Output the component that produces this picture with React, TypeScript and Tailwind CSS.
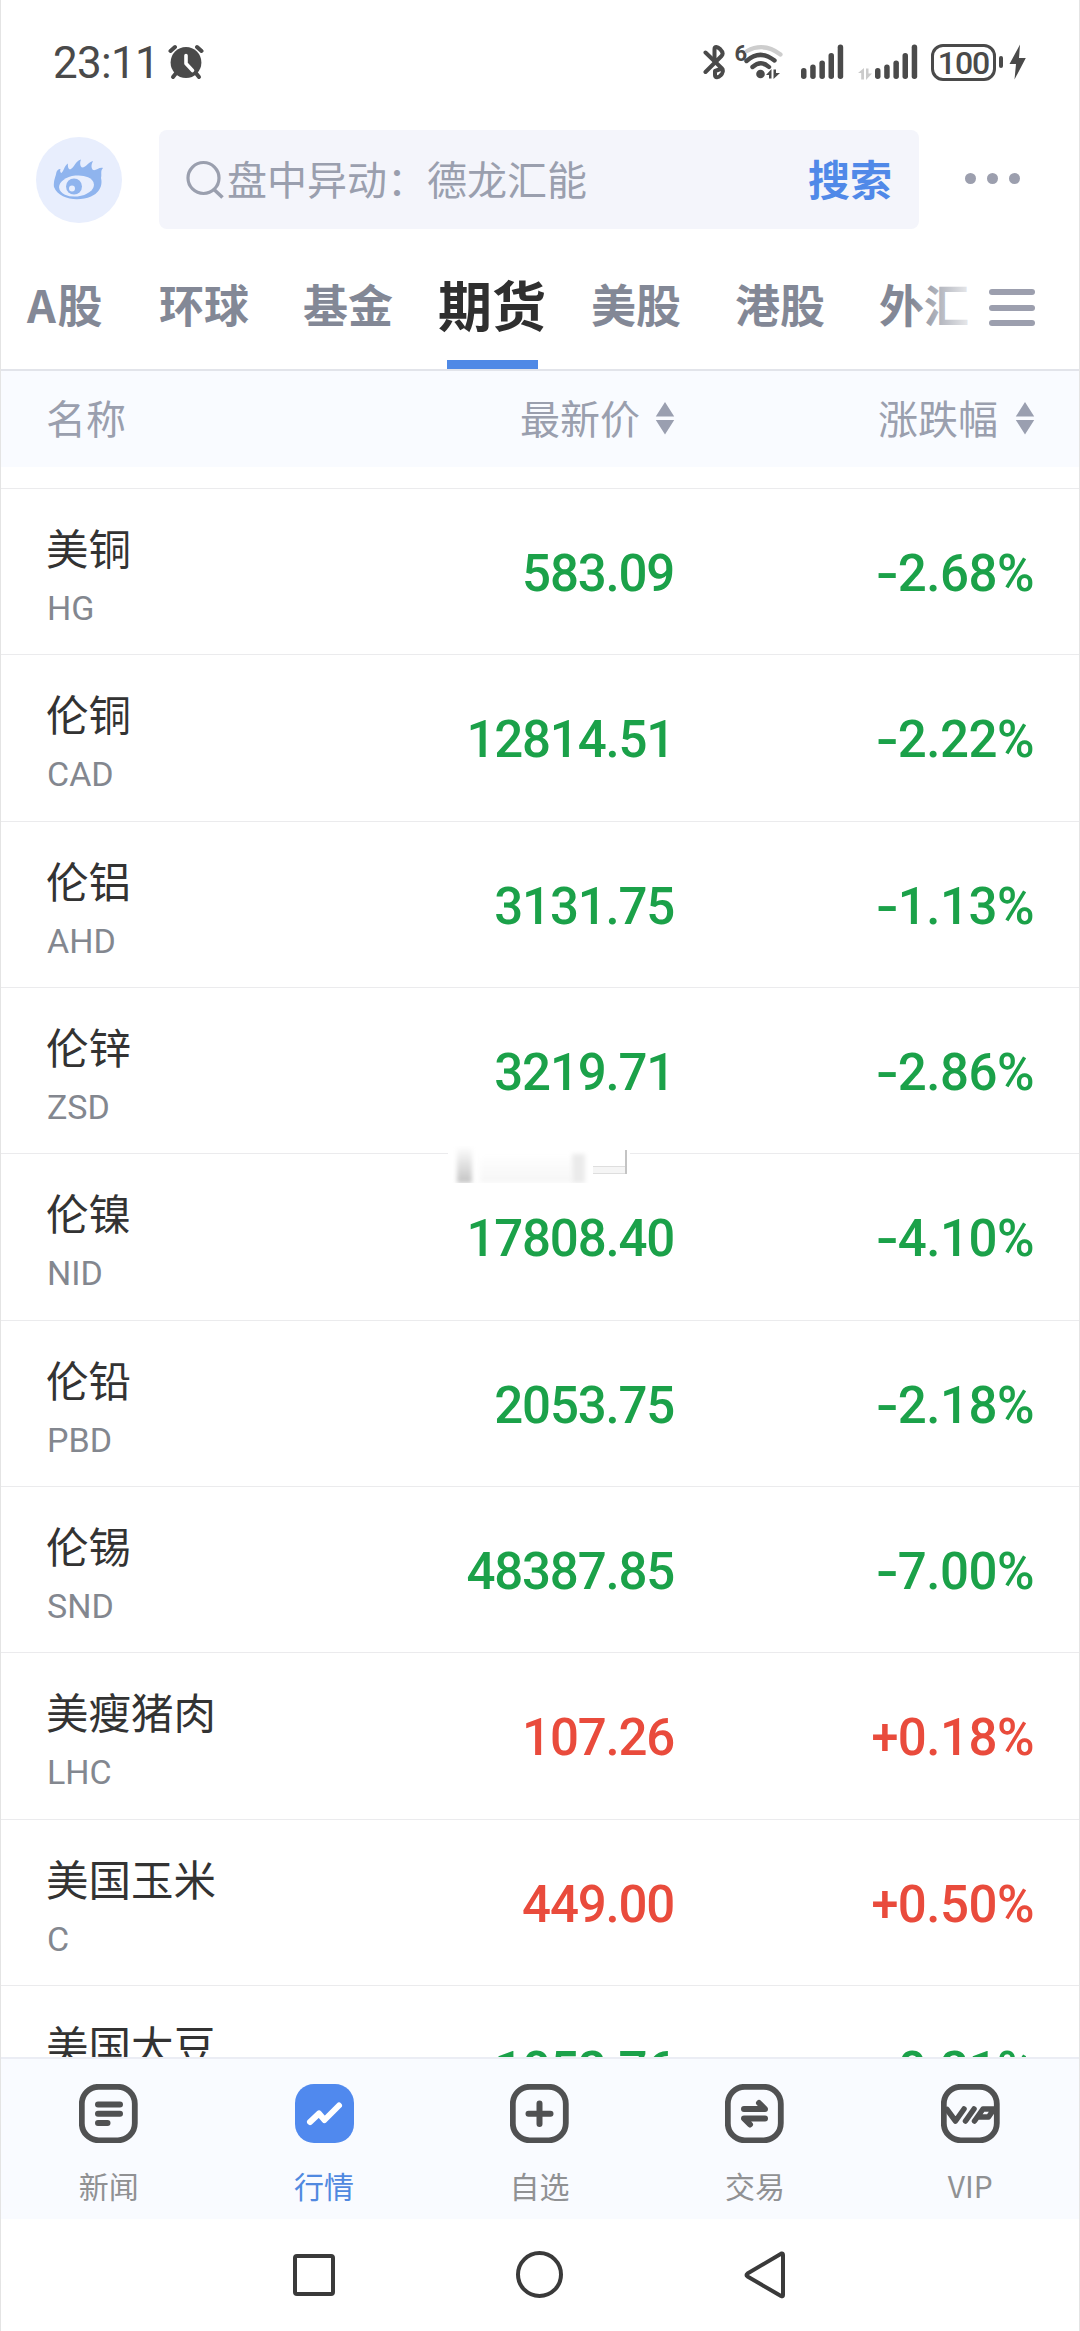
import React from "react";
import clsx from "clsx";

const tabs = ["A股", "环球", "基金", "期货", "美股", "港股", "外汇"];

const quotes = [
  { name: "美铜", code: "HG", price: "583.09", change: "-2.68%" },
  { name: "伦铜", code: "CAD", price: "12814.51", change: "-2.22%" },
  { name: "伦铝", code: "AHD", price: "3131.75", change: "-1.13%" },
  { name: "伦锌", code: "ZSD", price: "3219.71", change: "-2.86%" },
  { name: "伦镍", code: "NID", price: "17808.40", change: "-4.10%" },
  { name: "伦铅", code: "PBD", price: "2053.75", change: "-2.18%" },
  { name: "伦锡", code: "SND", price: "48387.85", change: "-7.00%" },
  { name: "美瘦猪肉", code: "LHC", price: "107.26", change: "+0.18%" },
  { name: "美国玉米", code: "C", price: "449.00", change: "+0.50%" },
  { name: "美国大豆", code: "S", price: "1052.76", change: "-0.21%" },
];

function AlarmIcon() {
  return (
    <svg width="36" height="36" viewBox="0 0 36 36" className="ml-[9px] text-[#4a4a4a]">
      <path d="M9 28 L5 33 M27 28 L31 33" stroke="currentColor" strokeWidth="4" strokeLinecap="round" />
      <path d="M2.500 7 L7 3 M33.500 7 L29 3" stroke="currentColor" strokeWidth="4" strokeLinecap="round" />
      <circle cx="18" cy="18.500" r="15.400" fill="currentColor" />
      <path d="M18 11.500 V19.500 L24.500 26.500" stroke="#fff" strokeWidth="3.600" strokeLinecap="round" strokeLinejoin="round" fill="none" />
    </svg>
  );
}

function BluetoothIcon() {
  return (
    <svg width="22" height="36" viewBox="0 0 22 36" fill="none" stroke="#4a4a4a" strokeWidth="4" strokeLinecap="round" strokeLinejoin="round">
      <path d="M2.500 8.500 L19 24.500 C20.500 26 20 29 17.500 31.500 C15.500 33.800 12 34 12 31 V27 L19 24.500" />
      <path d="M2.500 28 L18.500 12 C20.500 10 19.500 7.500 17 5 C14.500 2.500 11.500 2 11.500 5 V17" />
    </svg>
  );
}

function WifiIcon() {
  return (
    <svg width="48" height="36" viewBox="0 0 48 36" fill="none" strokeLinecap="round">
      <path d="M12 7 Q29 -2 45.500 10.500" stroke="#cdcdcd" strokeWidth="4.200" />
      <path d="M11.500 17 Q25 5 39.500 16.500" stroke="#4a4a4a" strokeWidth="4.400" />
      <path d="M17.500 23 Q26 15.500 34 23" stroke="#4a4a4a" strokeWidth="4.400" />
      <circle cx="25.500" cy="30" r="4.300" fill="#4a4a4a" />
      <path d="M36.500 25 V34.500 H34 V31 H31 Z M38.500 35 V25.500 H41 V29 H45 Z" fill="#4a4a4a" />
    </svg>
  );
}

function SignalIcon({ className }: { className?: string }) {
  return (
    <svg width="43" height="36" viewBox="0 0 43 36" className={className} fill="#4a4a4a">
      <rect x="0" y="24" width="5.500" height="11" rx="2.700" />
      <rect x="9.200" y="20.500" width="5.500" height="14.500" rx="2.700" />
      <rect x="18.400" y="16.500" width="5.500" height="18.500" rx="2.700" />
      <rect x="27.500" y="9" width="5.500" height="26" rx="2.700" />
      <rect x="36.700" y="0.500" width="5.500" height="34.500" rx="2.700" />
    </svg>
  );
}

function DataArrows() {
  return (
    <svg width="14" height="12" viewBox="0 0 14 12" className="mt-6 ml-[14px]" fill="#cbcbcb">
      <path d="M6 0 V11.500 H3.200 V5 H0 Z M8 0.500 H10.500 V5.500 H14 L8 12 Z" />
    </svg>
  );
}

function BoltIcon() {
  return (
    <svg width="17" height="36" viewBox="0 0 17 36" className="ml-[6px]" fill="#4a4a4a">
      <path d="M11 0.500 L0.500 20 H7 L5.500 35.500 L16.800 14 H10 Z" />
    </svg>
  );
}

function StatusBar() {
  return (
    <div className="flex h-[130px] items-start pt-[44px] pr-[53px] pl-[52px]">
      <span className="font-['Roboto',sans-serif] text-[44px] leading-[38px] tracking-[-0.7px] text-[#4a4a4a]">
        23:11
      </span>
      <AlarmIcon />
      <div className="ml-auto flex items-start">
        <BluetoothIcon />
        <span className="-mt-px -mr-[12px] ml-[9px] font-['Roboto',sans-serif] text-[22px] leading-[22px] font-bold text-[#4a4a4a]">
          6
        </span>
        <WifiIcon />
        <SignalIcon className="ml-[18px]" />
        <DataArrows />
        <SignalIcon className="ml-[3px]" />
        <div className="ml-[13px] flex h-[37px] w-[65px] items-center justify-center rounded-[12px] border-[3px] border-[#4a4a4a] font-['Roboto',sans-serif] text-[32px] font-medium tracking-[-1px] text-[#4a4a4a]">
          100
        </div>
        <div className="mt-[12px] ml-[3px] h-[12px] w-1 rounded-full bg-[#4a4a4a]" />
        <BoltIcon />
      </div>
    </div>
  );
}

function EyeLogo() {
  return (
    <div className="flex size-[86px] items-center justify-center rounded-full bg-[#e8eefd]">
      <svg width="52" height="42" viewBox="0 0 52 42">
        <path
          fill="#8fb4ee"
          d="M1 28 C0 22 3 17 3.500 13 C4 11 6 9.500 7.500 10 C6.500 13 8 14 8.500 14 C11 12 11 7 15 4.500 C14.500 8 15.500 10 17 10.500 C22 8.500 22 2 28 0.500 C26 5 28 8 29 8.500 C34 8 34 4 40 2 C38 6 38 9 40 11 C43 12 46 8 50 9 C47 12 49 15 48 19 C50 27 46 34 38 37.500 C26 42.500 6 41 1 28 Z"
        />
        <ellipse cx="23.500" cy="27" rx="17.500" ry="10.500" fill="#e8eefd" transform="rotate(-6 23.500 27)" />
        <circle cx="21" cy="27.500" r="8" fill="#8fb4ee" />
        <circle cx="19" cy="29.500" r="3" fill="#e8eefd" />
      </svg>
    </div>
  );
}

function SearchHeader() {
  return (
    <div className="flex h-[99px] items-center pl-[35px]">
      <EyeLogo />
      <div className="ml-[37px] flex h-full w-[760px] items-center rounded-[8px] bg-[#f4f5fb] px-[27px]">
        <svg width="39" height="40" viewBox="0 0 39 40" fill="none" stroke="#9a9fae" strokeWidth="3.200">
          <circle cx="17.500" cy="18" r="15.500" />
          <path d="M27.500 29 L36.500 37.500" strokeWidth="3.600" />
        </svg>
        <span className="mb-[3px] ml-0.5 text-[40px] leading-[40px] text-[#9a9fae]">盘中异动：德龙汇能</span>
        <span className="mb-[3px] ml-auto text-[42px] leading-[42px] font-bold text-[#5089e8]">搜索</span>
      </div>
      <div className="mb-0.5 ml-[46px] flex gap-[11px]">
        <i className="size-[11px] rounded-full bg-[#9c9fae]" />
        <i className="size-[11px] rounded-full bg-[#9c9fae]" />
        <i className="size-[11px] rounded-full bg-[#9c9fae]" />
      </div>
    </div>
  );
}

function Tabs() {
  return (
    <div className="flex h-[142px] border-b-2 border-[#e2e4ea]">
      <div className="relative flex w-[967px] gap-[54px] overflow-hidden pl-[25px] whitespace-nowrap">
        {tabs.map((tab) => {
          const active = tab === "期货";
          return (
            <div
              key={tab}
              className={clsx(
                "flex h-full shrink-0 flex-col items-center justify-between pt-[42px] font-bold",
                active ? "-mx-[9px] text-[54px] leading-[66px] text-[#2f2f2f]" : "text-[45px] leading-[66px] text-[#838896]",
                tab === "A股" && "w-[79px] tracking-[1.5px]",
              )}
            >
              {tab}
              {active && <div className="h-[9px] w-[91px] bg-[#4f89e6]" />}
            </div>
          );
        })}
        <div className="absolute top-0 right-0 h-full w-[56px] bg-linear-to-r from-white/0 to-white/80" />
      </div>
      <div className="mt-[60px] ml-[21px] flex h-[37px] w-[46px] flex-col justify-between">
        <div className="h-[6px] rounded-full bg-[#9c9fae]" />
        <div className="h-[6px] rounded-full bg-[#9c9fae]" />
        <div className="h-[6px] rounded-full bg-[#9c9fae]" />
      </div>
    </div>
  );
}

function SortArrows() {
  return (
    <svg width="20" height="33" viewBox="0 0 20 34" fill="#9a9fb0" className="mt-[3px]">
      <path d="M10 0 L19.500 15 H0.500 Z M10 33.500 L19.500 18.500 H0.500 Z" />
    </svg>
  );
}

function TableHeader() {
  return (
    <div className="flex h-[96px] items-center bg-[#f9fbff] pr-[44px] pb-[5px] pl-[45px] text-[40px] leading-[40px] text-[#9a9fae]">
      <span>名称</span>
      <span className="ml-auto flex items-center gap-[15px]">
        最新价
        <SortArrows />
      </span>
      <span className="flex w-[360px] items-center justify-end gap-[17px]">
        涨跌幅
        <SortArrows />
      </span>
    </div>
  );
}

function QuoteRow({ quote }: { quote: (typeof quotes)[number] }) {
  const up = quote.change.startsWith("+");
  return (
    <div className="flex h-[166.33px] shrink-0 items-center border-b-[1.5px] border-[#ebebed] pr-[45px] pl-[45px]">
      <div className="flex flex-col pt-[9px]">
        <span className="text-[42.5px] leading-[56px] text-[#333333]">{quote.name}</span>
        <span className="mt-[8px] pl-px font-['Roboto',sans-serif] text-[34px] leading-[50px] text-[#83878f]">
          {quote.code}
        </span>
      </div>
      <div
        className={clsx(
          "ml-auto flex pt-[5px] font-['Roboto',sans-serif] text-[51px] font-medium",
          up ? "text-[#e94b3c]" : "text-[#1ba149]",
        )}
      >
        <span className="tracking-[-1.2px]">{quote.price}</span>
        <span className="w-[360px] text-right tracking-[-0.5px]">
          <span className={clsx("inline-block origin-right", up ? "scale-x-95" : "scale-x-[1.3]")}>
            {quote.change[0]}
          </span>
          {quote.change.slice(1)}
        </span>
      </div>
    </div>
  );
}

// Leftover of a floating toast that is fading out over the list
function FadingMark() {
  return (
    <div className="absolute top-[679px] left-[447px] flex h-[37px] w-[182px] items-stretch overflow-hidden bg-white">
      <div className="ml-[9px] w-[15px] bg-linear-to-b from-white to-[#c4c4c4] blur-[2px]" />
      <div className="mt-2 ml-2 w-[92px] bg-linear-to-b from-white to-[#f6f6f6] blur-[2px]" />
      <div className="mt-2 w-[13px] bg-[#ebebeb] blur-[2px]" />
      <div className="mt-5 ml-2 h-[8px] w-[32px] border-y border-[#dedede] bg-[#f5f5f5]" />
      <div className="mt-1 h-[24px] w-[2px] bg-[#c4c4c4]" />
    </div>
  );
}

const frame = { x: 2.8, y: 2.8, width: 53, height: 53.5, rx: 17, strokeWidth: 5.8 };

function NavIcon({ name }: { name: string }) {
  return (
    <svg width="59" height="59" viewBox="0 0 59 59" fill="none" stroke="#505152" strokeLinecap="round" strokeLinejoin="round">
      {name === "行情" ? (
        <>
          <rect width="59" height="59" rx="19" fill="#5089ee" stroke="none" />
          <path d="M15 38 L24 29.500 L29.500 36 L44 21.500" stroke="#fff" strokeWidth="6" />
        </>
      ) : (
        <rect {...frame} />
      )}
      {name === "新闻" && <path d="M19 20.500 H41 M19 29.800 H41 M19 39 H28.500" strokeWidth="6" />}
      {name === "自选" && <path d="M29.500 19.500 V40 M18.500 29.800 H40.500" strokeWidth="6" />}
      {name === "交易" && (
        <>
          <path d="M19 25 H40 L34 19" strokeWidth="6" />
          <path d="M40 34.500 H19 L25 40.500" strokeWidth="6" />
        </>
      )}
      {name === "VIP" && (
        <path d="M6 25.500 L14.500 37 L23 25 M24.500 37 L33 25 M33.500 37 L42 25 H53 L47.500 33 H38" strokeWidth="5.500" />
      )}
    </svg>
  );
}

function BottomNav() {
  return (
    <div className="flex h-[162px] shrink-0 border-t-2 border-[#ebedf4] bg-[#f9fbff] pr-px">
      {["新闻", "行情", "自选", "交易", "VIP"].map((name) => (
        <div key={name} className="flex flex-1 flex-col items-center pt-[25px]">
          <NavIcon name={name} />
          <span
            className={clsx("mt-[22px] text-[30px] leading-[40px]", name === "行情" ? "text-[#5089e0]" : "text-[#909193]")}
          >
            {name}
          </span>
        </div>
      ))}
    </div>
  );
}

function SystemNav() {
  return (
    <div className="flex h-[112px] items-center justify-center gap-[181px] pr-[2px]">
      <div className="-mt-[1px] size-[42px] rounded-[4px] border-4 border-[#3a3a3a]" />
      <div className="-mt-[1px] size-[47px] rounded-full border-4 border-[#3a3a3a]" />
      <svg width="42" height="48" viewBox="0 0 42 48" className="-mt-[1px]" fill="none" stroke="#3a3a3a" strokeWidth="4" strokeLinejoin="round">
        <path d="M37.500 2.500 Q39 2 39 4 V44 Q39 46 37 45 L3.500 25.500 Q1.500 24 3.500 22.500 Z" />
      </svg>
    </div>
  );
}

export default function App() {
  return (
    <div className="flex h-[2331px] w-[1080px] flex-col overflow-hidden border-x border-[#e4e4e4] bg-white font-['Noto_Sans_CJK_SC',sans-serif]">
      <StatusBar />
      <SearchHeader />
      <Tabs />
      <TableHeader />
      <div className="relative flex h-[1590px] shrink-0 flex-col overflow-hidden">
        <div className="h-[22px] shrink-0 border-b-[1.5px] border-[#ebebed]" />
        {quotes.map((quote) => (
          <QuoteRow key={quote.code} quote={quote} />
        ))}
        <FadingMark />
      </div>
      <BottomNav />
      <SystemNav />
    </div>
  );
}
